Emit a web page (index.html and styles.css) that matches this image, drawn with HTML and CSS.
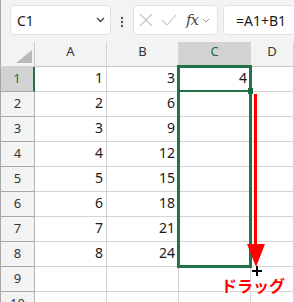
FILE: index.html
```html
<!DOCTYPE html>
<html lang="ja">
<head>
  <meta charset="UTF-8" />
  <title>Excel drag fill</title>
  <link rel="stylesheet" href="styles.css">
</head>
<body>
  <div class="app">
    <div class="toolbar">
      <div class="namebox">
        <span>C1</span>
        <svg class="chev" width="9" height="6" viewBox="0 0 9 6"><path d="M1 1l3.5 3.5L8 1" fill="none" stroke="#444" stroke-width="1.3"/></svg>
      </div>
      <svg class="grip" width="4" height="12" viewBox="0 0 4 12"><circle cx="2" cy="2" r="1.2" fill="#555"/><circle cx="2" cy="6" r="1.2" fill="#555"/><circle cx="2" cy="10" r="1.2" fill="#555"/></svg>
      <div class="fxbox">
        <svg class="ic-x" width="14" height="14" viewBox="0 0 14 14"><path d="M1 1l12 12M13 1L1 13" stroke="#c4c4c4" stroke-width="1.1"/></svg>
        <svg class="ic-ok" width="16" height="12" viewBox="0 0 16 12"><path d="M1 6l5 5L15 1" fill="none" stroke="#c4c4c4" stroke-width="1.1"/></svg>
        <span class="fx">fx</span>
        <svg class="ic-chev" width="8" height="5" viewBox="0 0 8 5"><path d="M1 1l3 3 3-3" fill="none" stroke="#999" stroke-width="1"/></svg>
      </div>
      <div class="formula">=A1+B1</div>
    </div>

    <div class="grid">
      <div class="corner"><svg width="34" height="24" viewBox="0 0 34 24"><path d="M31 8V21H15z" fill="#b9b9b9"/></svg></div>
      <div class="colhead">A</div>
      <div class="colhead">B</div>
      <div class="colhead sel">C</div>
      <div class="colhead">D</div>

      <div class="rowhead sel">1</div><div class="cell">1</div><div class="cell">3</div><div class="cell">4</div><div class="cell"></div>
      <div class="rowhead">2</div><div class="cell">2</div><div class="cell">6</div><div class="cell"></div><div class="cell"></div>
      <div class="rowhead">3</div><div class="cell">3</div><div class="cell">9</div><div class="cell"></div><div class="cell"></div>
      <div class="rowhead">4</div><div class="cell">4</div><div class="cell">12</div><div class="cell"></div><div class="cell"></div>
      <div class="rowhead">5</div><div class="cell">5</div><div class="cell">15</div><div class="cell"></div><div class="cell"></div>
      <div class="rowhead">6</div><div class="cell">6</div><div class="cell">18</div><div class="cell"></div><div class="cell"></div>
      <div class="rowhead">7</div><div class="cell">7</div><div class="cell">21</div><div class="cell"></div><div class="cell"></div>
      <div class="rowhead">8</div><div class="cell">8</div><div class="cell">24</div><div class="cell"></div><div class="cell"></div>
      <div class="rowhead">9</div><div class="cell"></div><div class="cell"></div><div class="cell"></div><div class="cell"></div>
      <div class="rowhead">10</div><div class="cell"></div><div class="cell"></div><div class="cell"></div><div class="cell"></div>
    </div>

    <div class="range"></div>
    <div class="active-line"></div>
    <div class="handle"></div>

    <svg class="drag" width="30" height="190" viewBox="0 0 30 190">
      <rect x="14" y="0" width="3" height="152" fill="#ff0000"/>
      <path d="M7 150H25L16 173z" fill="#ff0000"/>
      <path d="M17 172v10M12 177h10" stroke="#fff" stroke-width="4"/>
      <path d="M17 172v10M12 177h10" stroke="#000" stroke-width="2"/>
    </svg>
    <div class="drag-label">ドラッグ</div>
  </div>
</body>
</html>
```

FILE: styles.css
```css
body {
  margin: 0;
  width: 294px;
  height: 302px;
  overflow: hidden;
  background-color: #fff;
  font-family: "Noto Sans", "Noto Sans CJK JP", sans-serif;
  color: #1a1a1a;
}

.app {
  position: relative;
  width: 294px;
  height: 302px;
  overflow: hidden;
}

.toolbar {
  height: 42px;
  box-sizing: border-box;
  display: flex;
  align-items: flex-start;
  padding: 5px 0 0 9px;
  background-color: #f3f3f3;
  border-left: 1px solid #a6a6a6;
}

.namebox, .fxbox, .formula {
  height: 30px;
  box-sizing: border-box;
  background-color: #fff;
  border: 1px solid #e2e2e2;
  border-radius: 4px;
  display: flex;
  align-items: center;
}

.namebox {
  width: 101px;
  padding: 0 5px 0 6px;
  justify-content: space-between;
  font-size: 14px;
}

.grip {
  margin: 11px 9px 0 9px;
}

.fxbox {
  width: 85px;
  padding-left: 5px;
}

.ic-x {
  margin-right: 8px;
}

.ic-ok {
  margin-right: 9px;
}

.fx {
  font-family: "DejaVu Serif", serif;
  font-style: italic;
  font-size: 15px;
  color: #444;
  margin-right: 4px;
  letter-spacing: -1px;
}

.formula {
  flex: 1;
  margin-left: 5px;
  margin-right: -10px;
  padding-left: 12px;
  font-size: 14px;
}

.grid {
  display: grid;
  grid-template-columns: 35px 72px 72px 72px 1fr;
  grid-auto-rows: 25px;
}

.corner, .colhead, .rowhead, .cell {
  box-sizing: border-box;
  border-right: 1px solid #d4d4d4;
  border-bottom: 1px solid #d4d4d4;
}

.corner {
  background-color: #f3f3f3;
  border-left: 1px solid #a6a6a6;
  border-right-color: #c8c8c8;
}

.corner svg {
  display: block;
}

.colhead {
  background-color: #f3f3f3;
  text-align: center;
  font-size: 13px;
  line-height: 18px;
  color: #333;
  border-bottom-color: #c8c8c8;
}

.colhead.sel {
  background-color: #d2d2d2;
  color: #1e6b47;
}

.rowhead {
  background-color: #f3f3f3;
  text-align: center;
  font-size: 13px;
  line-height: 22px;
  color: #333;
  border-left: 1px solid #a6a6a6;
  border-right-color: #b4b4b4;
  border-bottom-color: #a8a8a8;
}

.rowhead.sel {
  background-color: #d2d2d2;
  color: #1e6b47;
  border-right: 2px solid #217346;
}

.cell {
  text-align: right;
  padding-right: 3px;
  font-size: 14px;
  line-height: 22px;
}

.range {
  position: absolute;
  left: 177px;
  top: 65px;
  width: 75px;
  height: 203px;
  box-sizing: border-box;
  border: 3px solid #217346;
}

.active-line {
  position: absolute;
  left: 179px;
  top: 90px;
  width: 71px;
  height: 2px;
  background-color: #217346;
}

.handle {
  position: absolute;
  left: 248px;
  top: 88px;
  width: 5px;
  height: 6px;
  background-color: #1c6a41;
}

.drag {
  position: absolute;
  left: 240px;
  top: 94px;
}

.drag-label {
  position: absolute;
  left: 221px;
  top: 277px;
  font-family: "Noto Sans CJK JP", sans-serif;
  font-weight: bold;
  font-size: 16px;
  line-height: 16px;
  color: #ff0000;
  text-shadow: 1px 0 #fff, -1px 0 #fff, 0 1px #fff, 0 -1px #fff;
}
```
